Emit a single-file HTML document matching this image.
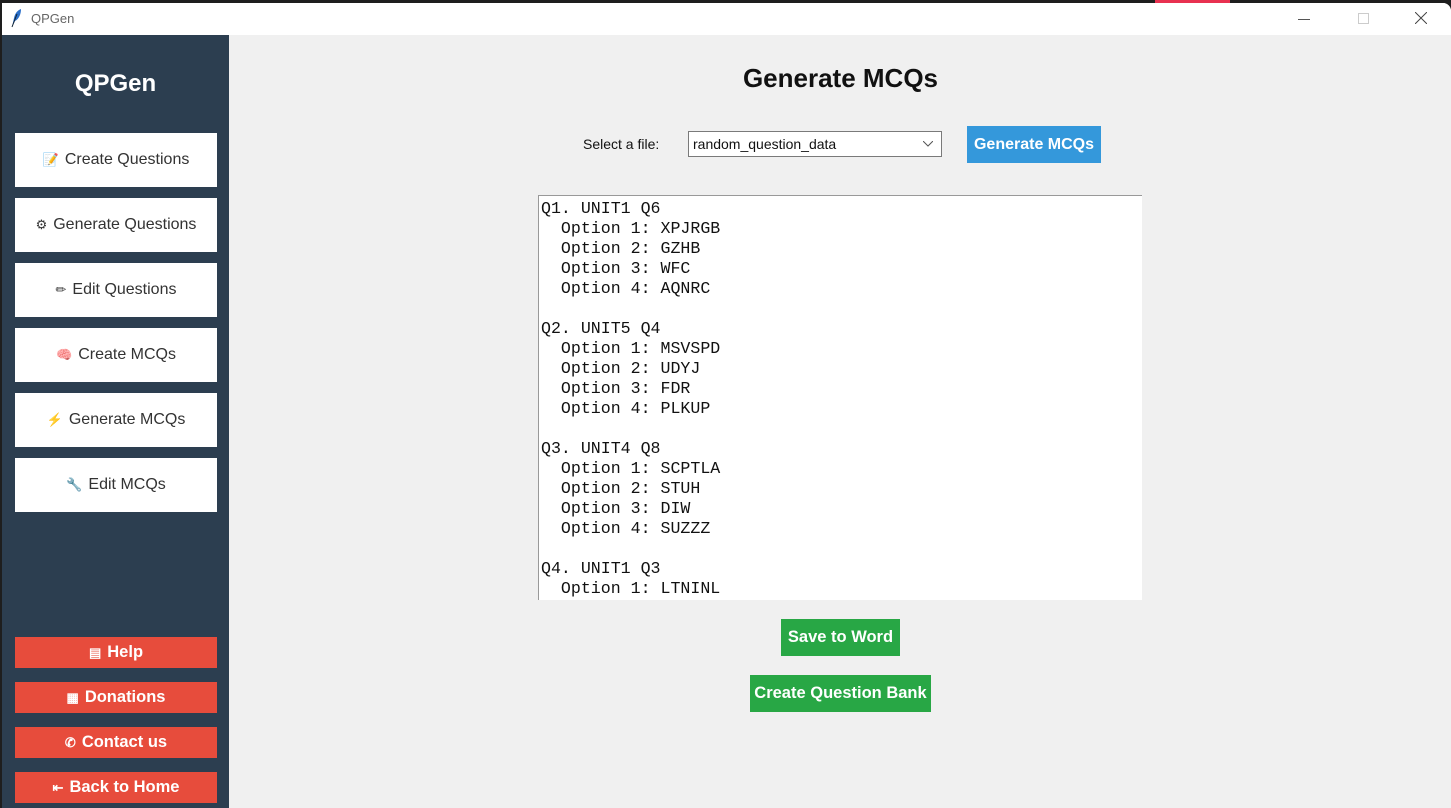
<!DOCTYPE html>
<html><head><meta charset="utf-8"><style>
*{margin:0;padding:0;box-sizing:border-box}
body{width:1451px;height:808px;background:#1e1e1e;position:relative;overflow:hidden;font-family:"Liberation Sans",sans-serif}
.win{position:absolute;left:2px;top:3px;width:1449px;height:805px;background:#f0f0f0;border-top-right-radius:8px;overflow:hidden}
.tb{position:absolute;left:0;top:0;width:100%;height:32px;background:#fff}
.tb .t{position:absolute;left:29px;top:8px;font-size:13px;color:#666}
.side{position:absolute;left:0;top:32px;width:227px;height:773px;background:#2c3e50}
.logo{position:absolute;left:0;width:227px;top:35px;text-align:center;color:#fff;font-weight:bold;font-size:24px}
.nb{position:absolute;left:13px;width:202px;height:54px;background:#fff;color:#333;font-size:16px;display:flex;align-items:center;justify-content:center;gap:6px}
.rb{position:absolute;left:13px;width:202px;height:31px;background:#e74c3c;color:#fff;font-weight:bold;font-size:16.5px;display:flex;align-items:center;justify-content:center;gap:6px}
.ic{font-size:13px}
.abs{position:absolute}
.ta{position:absolute;left:536px;top:192px;width:604px;height:405px;background:#fff;border-top:1px solid #999;border-left:1px solid #999;font-family:"Liberation Mono",monospace;font-size:16.6px;line-height:20px;padding:3px 0 0 2px;white-space:pre;color:#111;overflow:hidden}
.gb{position:absolute;background:#28a745;color:#fff;font-weight:bold;font-size:16.5px;display:flex;align-items:center;justify-content:center}
</style></head><body>
<div style="position:absolute;left:1155px;top:0;width:75px;height:3px;background:#e83150"></div>
<div class="win">
 <div class="tb"><svg class="abs" style="left:7px;top:5px" width="14" height="20" viewBox="0 0 14 20"><path d="M3 19 L5 10 C6 5 9 2 12 1 C12 6 10 11 6 13 Z" fill="#2a6fc9"/><path d="M3 19 L8 6" stroke="#123" stroke-width="1"/></svg><span class="t">QPGen</span>
 <div class="abs" style="left:1296px;top:16px;width:12px;height:1px;background:#555"></div>
 <div class="abs" style="left:1356px;top:10px;width:11px;height:11px;border:1px solid #ccc"></div>
 <svg class="abs" style="left:1413px;top:9px" width="12" height="12"><path d="M0 0L12 12M12 0L0 12" stroke="#444" stroke-width="1"/></svg>
 </div>
 <div class="side">
  <div class="logo">QPGen</div>
  <div class="nb" style="top:98px"><span class="ic">📝</span>Create Questions</div>
  <div class="nb" style="top:163px"><span class="ic">⚙</span>Generate Questions</div>
  <div class="nb" style="top:228px"><span class="ic">✏</span>Edit Questions</div>
  <div class="nb" style="top:293px"><span class="ic">🧠</span>Create MCQs</div>
  <div class="nb" style="top:358px"><span class="ic">⚡</span>Generate MCQs</div>
  <div class="nb" style="top:423px"><span class="ic">🔧</span>Edit MCQs</div>
  <div class="rb" style="top:602px"><span class="ic">▤</span>Help</div>
  <div class="rb" style="top:647px"><span class="ic">▦</span>Donations</div>
  <div class="rb" style="top:692px"><span class="ic">✆</span>Contact us</div>
  <div class="rb" style="top:737px"><span class="ic">⇤</span>Back to Home</div>
 </div>
 <div class="abs" style="left:228px;width:1221px;top:60px;text-align:center;font-weight:bold;font-size:26px;color:#111">Generate MCQs</div>
 <div class="abs" style="left:581px;top:133px;font-size:14px;color:#111">Select a file:</div>
 <div class="abs" style="left:686px;top:128px;width:254px;height:26px;background:#fff;border:1px solid #7a7a7a;font-size:14px;padding:4px 0 0 4px;color:#111">random_question_data<svg class="abs" style="left:234px;top:9px" width="10" height="6"><path d="M0 0L5 5L10 0" stroke="#555" fill="none"/></svg></div>
 <div class="abs" style="left:965px;top:123px;width:134px;height:37px;background:#3498db;color:#fff;font-weight:bold;font-size:16px;display:flex;align-items:center;justify-content:center">Generate MCQs</div>
 <div class="ta">Q1. UNIT1 Q6
  Option 1: XPJRGB
  Option 2: GZHB
  Option 3: WFC
  Option 4: AQNRC

Q2. UNIT5 Q4
  Option 1: MSVSPD
  Option 2: UDYJ
  Option 3: FDR
  Option 4: PLKUP

Q3. UNIT4 Q8
  Option 1: SCPTLA
  Option 2: STUH
  Option 3: DIW
  Option 4: SUZZZ

Q4. UNIT1 Q3
  Option 1: LTNINL</div>
 <div class="gb" style="left:779px;top:616px;width:119px;height:37px">Save to Word</div>
 <div class="gb" style="left:748px;top:672px;width:181px;height:37px">Create Question Bank</div>
</div>
</body></html>
